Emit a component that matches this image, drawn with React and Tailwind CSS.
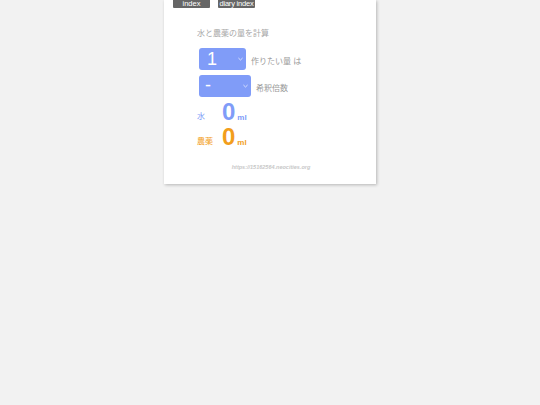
import React from 'react';

const Chevron = () => (
  <svg width="5" height="4" viewBox="0 0 6 4" className="absolute right-[3px] top-[9px]">
    <path d="M0.5 0.8 L3 3.2 L5.5 0.8" stroke="#e8eeff" strokeWidth="1" fill="none" />
  </svg>
);

export default function App() {
  return (
    <div className="min-h-[405px] bg-[#f2f2f2] font-['Liberation_Sans','Noto_Sans_CJK_JP',sans-serif]">
      <div className="mx-auto w-[212px] h-[184px] bg-white shadow-[1px_1px_3px_rgba(0,0,0,0.25)]">
        <div className="flex gap-[8px] pl-[9px]">
          <div className="w-[37px] h-[8px] bg-[#666] text-white text-[7.5px] leading-[7px] text-center whitespace-nowrap rounded-b-[1px]">index</div>
          <div className="w-[37px] h-[8px] bg-[#666] text-white text-[7.5px] leading-[7px] text-center whitespace-nowrap tracking-[-0.2px] rounded-b-[1px]">diary index</div>
        </div>
        <div className="pl-[33px] pt-[21px]">
          <div className="text-[8px] leading-[10px] text-[#a8a8a8]">水と農薬の量を計算</div>
          <div className="flex items-end mt-[9px] pl-[2px]">
            <div className="relative w-[47px] h-[22px] bg-[#809cf8] rounded-[3px] text-white text-[18px] leading-[22px] pl-[8px]">
              1
              <Chevron />
            </div>
            <span className="ml-[5px] text-[8px] leading-[10px] text-[#999] mb-[3px]">作りたい量 は</span>
          </div>
          <div className="flex items-end mt-[5px] pl-[2px]">
            <div className="relative w-[52px] h-[22px] bg-[#809cf8] rounded-[3px] text-white text-[18px] leading-[20px] pl-[6px]">
              -
              <Chevron />
            </div>
            <span className="ml-[5px] text-[8px] leading-[10px] text-[#999] mb-[3px]">希釈倍数</span>
          </div>
          <div className="flex items-end mt-[4px] h-[22px]">
            <span className="w-[25px] text-[8px] leading-[8px] text-[#809cf8] mb-[2px]">水</span>
            <span className="text-[24px] leading-[22px] font-bold text-[#809cf8]">0</span>
            <span className="ml-[2px] text-[8px] leading-[8px] font-bold text-[#809cf8] mb-[1px]">ml</span>
          </div>
          <div className="flex items-end mt-[3px] h-[22px]">
            <span className="w-[25px] text-[8px] leading-[8px] text-[#f29e1c] mb-[2px]">農薬</span>
            <span className="text-[24px] leading-[22px] font-bold text-[#f29e1c]">0</span>
            <span className="ml-[2px] text-[8px] leading-[8px] font-bold text-[#f29e1c] mb-[1px]">ml</span>
          </div>
        </div>
        <div className="mt-[16px] text-center text-[5.5px] leading-[6px] italic font-bold text-[#c8c8c8] pl-[2px]">https://15162564.neocities.org</div>
      </div>
    </div>
  );
}
